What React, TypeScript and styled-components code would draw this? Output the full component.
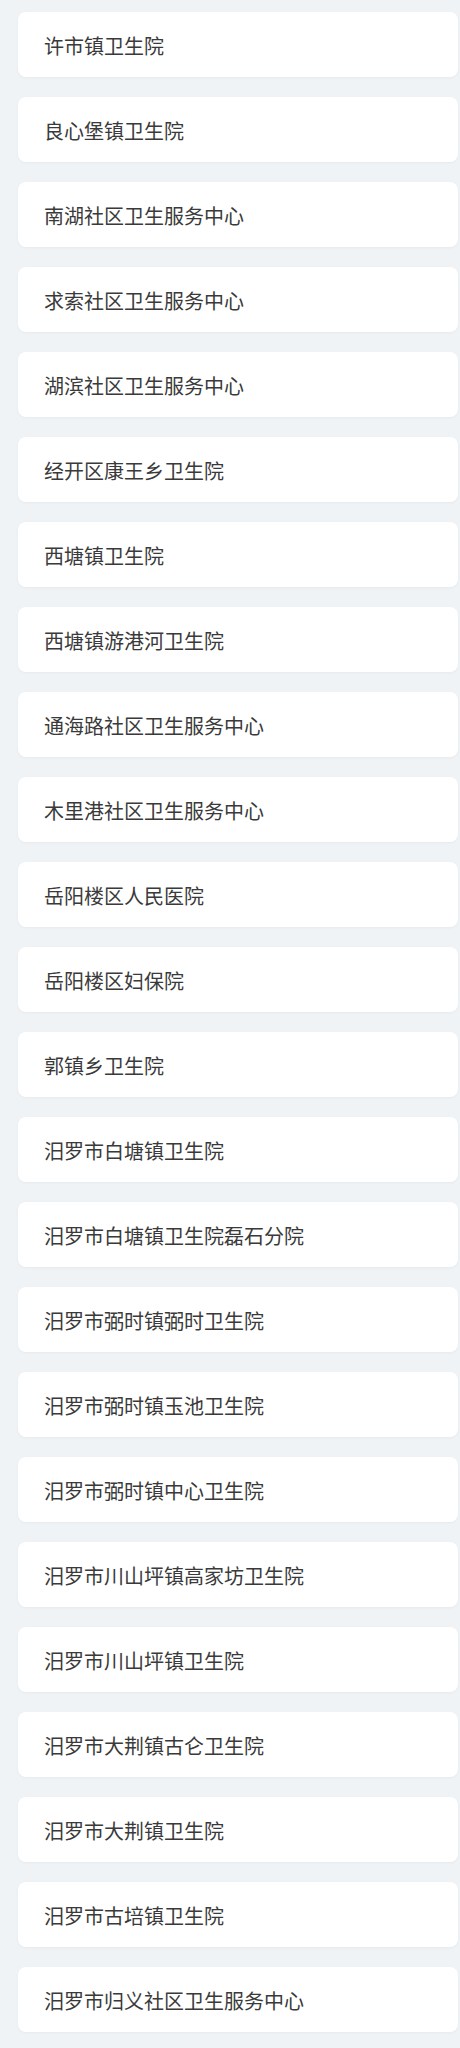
import React from 'react';
import styled, { createGlobalStyle } from 'styled-components';

const GlobalStyle = createGlobalStyle`
  html, body {
    margin: 0;
    padding: 0;
    background: #eff3f6;
  }
  body {
    font-family: "Noto Sans CJK SC", "Noto Sans", sans-serif;
  }
`;

const Page = styled.div`
  padding: 12px 2px 16px 18px;
  display: flex;
  flex-direction: column;
  gap: 20px;
`;

const Card = styled.div`
  height: 65px;
  background: #ffffff;
  border-radius: 8px;
  box-shadow: 0 1px 3px rgba(0, 0, 0, 0.04);
  display: flex;
  align-items: center;
  padding-left: 26px;
  box-sizing: border-box;
`;

const Name = styled.span`
  font-size: 20px;
  color: #3a3a3a;
  line-height: 1;
  margin-top: 2px;
`;

const names = [
  '许市镇卫生院',
  '良心堡镇卫生院',
  '南湖社区卫生服务中心',
  '求索社区卫生服务中心',
  '湖滨社区卫生服务中心',
  '经开区康王乡卫生院',
  '西塘镇卫生院',
  '西塘镇游港河卫生院',
  '通海路社区卫生服务中心',
  '木里港社区卫生服务中心',
  '岳阳楼区人民医院',
  '岳阳楼区妇保院',
  '郭镇乡卫生院',
  '汨罗市白塘镇卫生院',
  '汨罗市白塘镇卫生院磊石分院',
  '汨罗市弼时镇弼时卫生院',
  '汨罗市弼时镇玉池卫生院',
  '汨罗市弼时镇中心卫生院',
  '汨罗市川山坪镇高家坊卫生院',
  '汨罗市川山坪镇卫生院',
  '汨罗市大荆镇古仑卫生院',
  '汨罗市大荆镇卫生院',
  '汨罗市古培镇卫生院',
  '汨罗市归义社区卫生服务中心',
];

export default function App() {
  return (
    <>
      <GlobalStyle />
      <Page>
        {names.map((n) => (
          <Card key={n}>
            <Name>{n}</Name>
          </Card>
        ))}
      </Page>
    </>
  );
}
